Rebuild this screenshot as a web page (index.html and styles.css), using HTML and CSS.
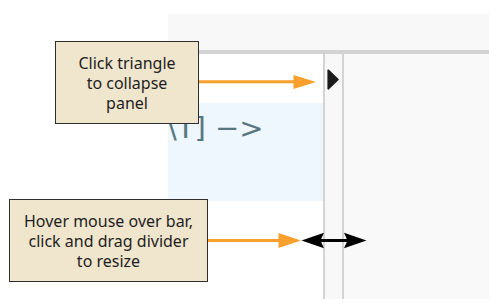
FILE: index.html
```html
<!DOCTYPE html>
<html>
<head>
<meta charset="utf-8">
<link rel="stylesheet" href="styles.css">
</head>
<body>
<div class="stage">
  <div class="window">
    <div class="toolbar"></div>
    <div class="main">
      <div class="left">
        <div class="code"><span class="code-text">\T] −&gt;</span></div>
      </div>
      <div class="divider">
        <svg class="tri" width="12" height="21" viewBox="0 0 12 21"><polygon points="1.2,1.2 11,10.5 1.2,19.8" fill="#1b1b1b" stroke="#1b1b1b" stroke-width="1.6" stroke-linejoin="round"/></svg>
      </div>
      <div class="right"></div>
    </div>
  </div>

  <svg class="overlay" width="497" height="308" viewBox="0 0 497 308">
    <line x1="199" y1="81.7" x2="296" y2="81.7" stroke="#f9a02c" stroke-width="3"/>
    <polygon points="293.5,75 316,82 293.5,89" fill="#f9a02c"/>
    <line x1="208" y1="240.5" x2="281" y2="240.5" stroke="#f9a02c" stroke-width="3"/>
    <polygon points="278.5,233 301,240.5 278.5,248" fill="#f9a02c"/>
    <line x1="318" y1="240.5" x2="350" y2="240.5" stroke="#000" stroke-width="3"/>
    <path d="M301.5,240.5 L324,232.8 L320.5,240.5 L324,248.2 Z" fill="#000"/>
    <path d="M366.5,240.5 L344,232.8 L347.5,240.5 L344,248.2 Z" fill="#000"/>
  </svg>

  <div class="note note-collapse">Click triangle<br>to collapse<br>panel</div>
  <div class="note note-resize">Hover mouse over bar,<br>click and drag divider<br>to resize</div>
</div>
</body>
</html>
```

FILE: styles.css
```css
html, body {
  margin: 0;
  padding: 0;
  background: #ffffff;
}

body {
  width: 497px;
  height: 308px;
  overflow: hidden;
}

.stage {
  position: relative;
  box-sizing: border-box;
  width: 497px;
  height: 308px;
  padding: 14px 8px 9px 168px;
}

.window {
  display: flex;
  flex-direction: column;
  width: 321px;
  height: 285px;
}

.toolbar {
  height: 36px;
  background: #f8f8f8;
  border-bottom: 4px solid #d3d3d3;
}

.main {
  flex: 1;
  display: flex;
}

.left {
  width: 155px;
  background: #ffffff;
  overflow: hidden;
  padding-top: 49px;
}

.code {
  height: 98px;
  background: #eef7fe;
  overflow: hidden;
}

.code-text {
  display: block;
  margin-left: -1px;
  padding-top: 8px;
  font-family: "DejaVu Sans", sans-serif;
  font-size: 29px;
  line-height: 34px;
  color: #587680;
  white-space: nowrap;
}

.divider {
  width: 15px;
  background: #f8f8f8;
  border-left: 2px solid #d3d3d3;
  border-right: 2px solid #d3d3d3;
  padding-top: 15px;
  padding-left: 2px;
  box-sizing: content-box;
}

.tri {
  display: block;
}

.right {
  flex: 1;
  background: #f9f9f9;
}

.overlay {
  position: absolute;
  left: 0;
  top: 0;
  pointer-events: none;
}

.note {
  position: absolute;
  box-sizing: border-box;
  height: 83px;
  display: flex;
  align-items: center;
  justify-content: center;
  text-align: center;
  background: #f0e5cd;
  border: 1px solid #2e2e2e;
  font-family: "Noto Sans", sans-serif;
  font-size: 16px;
  line-height: 20px;
  color: #1e1e1e;
}

.note-collapse {
  left: 55px;
  top: 41px;
  width: 144px;
}

.note-resize {
  left: 9px;
  top: 199px;
  width: 199px;
}
```
